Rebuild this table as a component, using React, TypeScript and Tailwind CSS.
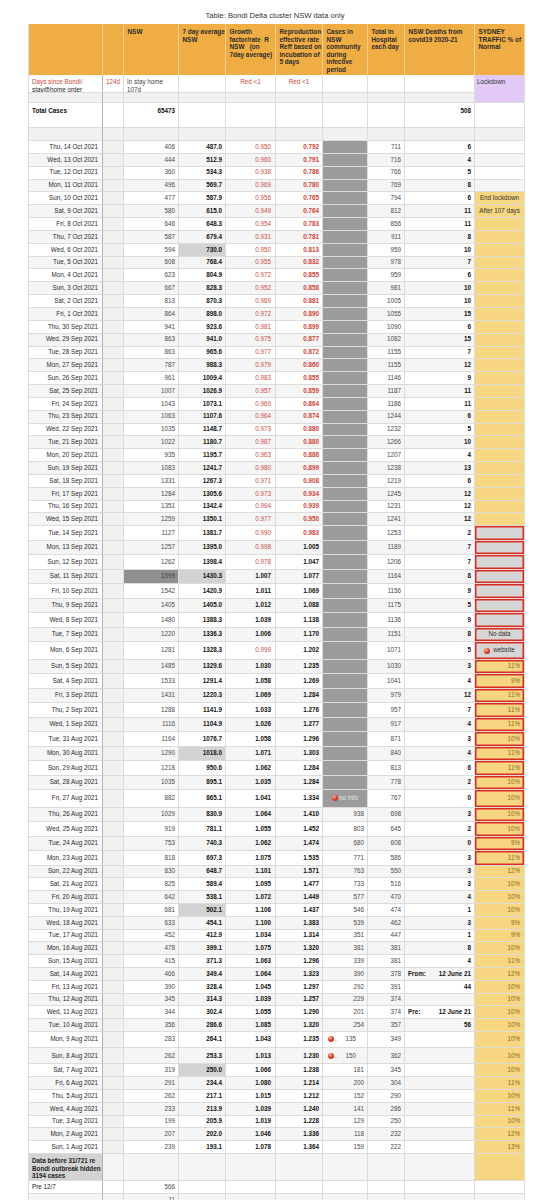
import clsx from "clsx";
import type { ReactNode } from "react";

const GRID = "grid grid-cols-[74px_21px_55px_47px_50px_47px_45px_37px_70px_50px]";

const DOW = ["Sun", "Mon", "Tue", "Wed", "Thu", "Fri", "Sat"];
const MON = ["Jan", "Feb", "Mar", "Apr", "May", "Jun", "Jul", "Aug", "Sep", "Oct", "Nov", "Dec"];

// rows run backwards one day at a time from 14 Oct 2021 to 1 Aug 2021
const NSW = "406 444 360 496 477 580 646 587 594 608 623 667 813 864 941 863 863 787 961 1007 1043 1063 1035 1022 935 1083 1331 1284 1351 1259 1127 1257 1262 1599 1542 1405 1480 1220 1281 1485 1533 1431 1288 1116 1164 1290 1218 1035 882 1029 919 753 818 830 825 642 681 633 452 478 415 466 390 345 344 356 283 262 319 291 262 233 199 207 239".split(" ");
const AVG = "487.0 512.9 534.3 569.7 587.9 615.0 648.3 679.4 730.0 768.4 804.9 828.3 870.3 898.0 923.6 941.0 965.6 988.3 1009.4 1026.9 1073.1 1107.6 1148.7 1180.7 1195.7 1241.7 1267.3 1305.6 1342.4 1350.1 1381.7 1395.0 1398.4 1430.3 1420.9 1405.0 1388.3 1336.3 1328.3 1329.6 1291.4 1220.3 1141.9 1104.9 1076.7 1018.0 950.6 895.1 865.1 830.9 781.1 740.3 697.3 648.7 589.4 538.1 502.1 454.1 412.9 399.1 371.3 349.4 328.4 314.3 302.4 286.6 264.1 253.3 250.0 234.4 217.1 213.9 205.9 202.0 193.1".split(" ");
const GROWTH = "0.950 0.960 0.938 0.969 0.956 0.949 0.954 0.931 0.950 0.955 0.972 0.952 0.969 0.972 0.981 0.975 0.977 0.979 0.983 0.957 0.969 0.964 0.973 0.987 0.963 0.980 0.971 0.973 0.994 0.977 0.990 0.998 0.978 1.007 1.011 1.012 1.039 1.006 0.999 1.030 1.058 1.069 1.033 1.026 1.058 1.071 1.062 1.035 1.041 1.064 1.055 1.062 1.075 1.101 1.095 1.072 1.106 1.100 1.034 1.075 1.063 1.064 1.045 1.039 1.055 1.085 1.043 1.013 1.066 1.080 1.015 1.039 1.019 1.046 1.078".split(" ");
const REFF = "0.792 0.791 0.786 0.780 0.765 0.764 0.783 0.781 0.813 0.832 0.855 0.858 0.881 0.890 0.899 0.877 0.872 0.860 0.855 0.859 0.864 0.874 0.880 0.880 0.886 0.899 0.908 0.934 0.939 0.950 0.983 1.005 1.047 1.077 1.069 1.088 1.138 1.170 1.202 1.235 1.269 1.284 1.276 1.277 1.296 1.303 1.284 1.284 1.334 1.410 1.452 1.474 1.535 1.571 1.477 1.449 1.437 1.383 1.314 1.320 1.296 1.323 1.297 1.257 1.290 1.320 1.235 1.230 1.238 1.214 1.212 1.240 1.228 1.336 1.364".split(" ");
const HOSP = "711 716 766 769 794 812 856 911 959 978 959 981 1005 1055 1090 1082 1155 1155 1146 1187 1186 1244 1232 1266 1207 1238 1219 1245 1231 1241 1253 1189 1206 1164 1156 1175 1136 1151 1071 1030 1041 979 957 917 871 840 813 778 767 698 645 608 586 550 516 470 474 462 447 381 381 378 391 374 374 357 349 362 345 304 290 286 250 232 222".split(" ");
const DEATHS = "6 4 5 8 6 11 11 8 10 7 6 10 10 15 6 15 7 12 9 11 11 6 5 10 4 13 6 12 12 12 2 7 7 8 9 5 9 8 5 3 4 12 7 4 3 4 6 2 0 3 2 0 3 3 3 4 1 3 1 8 4 - 44 - - 56".split(" ");
const COMM = "938 803 680 771 763 733 577 546 539 351 381 339 390 292 229 201 254 135 150 181 200 152 141 129 118 159".split(" ");
const PCT = "11 9 11 11 11 10 11 11 10 10 10 10 9 11 12 10 10 10 9 9 10 11 12 10 10 10 10 10 10 10 11 10 11 10 12 13".split(" ");

const HIGHLIGHT_AVG = [8, 33, 45, 56, 68];

const HEADERS = [
  [],
  [],
  ["NSW"],
  ["7 day average", "NSW"],
  ["Growth", "factor/rate  R", "NSW   (on", "7day average)"],
  ["Reproduction", "effective rate", "Reff based on", "incubation of", "5 days"],
  ["Cases in", "NSW", "community", "during", "infective", "period"],
  ["Total in", "Hospital", "each day"],
  ["NSW Deaths from", "covid19 2020-21"],
  ["SYDNEY", "TRAFFIC % of", "Normal"],
];

function dateLabel(i: number) {
  const d = new Date(Date.UTC(2021, 9, 14 - i));
  return `${DOW[d.getUTCDay()]}, ${d.getUTCDate()} ${MON[d.getUTCMonth()]} 2021`;
}

function rowH(i: number) {
  if (i === 38 || i === 48) return "h-[17.4px]";
  if (i >= 30 && i <= 52) return "h-[14.5px]";
  if (i === 66) return "h-[16px]";
  if (i === 67) return "h-[16.5px]";
  if (i < 30) return "h-[12.85px]";
  return "h-[12.8px]";
}

function Cell({ className, children }: { className?: string; children?: ReactNode }) {
  return (
    <div
      className={clsx(
        "flex min-w-0 items-center overflow-hidden whitespace-nowrap border-b border-r border-[#dcdcdc]",
        className,
      )}
    >
      {children}
    </div>
  );
}

function Ball() {
  return (
    <span className="inline-block h-[6px] w-[6px] shrink-0 rounded-full bg-[radial-gradient(circle_at_35%_30%,#ffb49c_0%,#e2452c_45%,#a3190b_100%)]" />
  );
}

function TrafficCell({ i, stripe }: { i: number; stripe: string }) {
  const box = "shadow-[inset_0_0_0_1.5px_#dd2c22]";
  if (i < 4) return <Cell className={stripe} />;
  if (i === 4)
    return <Cell className="justify-center bg-[#f6d680] text-[#333]">End lockdown</Cell>;
  if (i === 5)
    return <Cell className="justify-center bg-[#f6d680] text-[#333]">After 107 days</Cell>;
  if (i < 30) return <Cell className="bg-[#f6d680]" />;
  if (i < 39) {
    return (
      <Cell className={clsx("justify-center gap-[3px] bg-[#d5d5d5] text-[#333]", box)}>
        {i === 37 ? "No data" : null}
        {i === 38 ? (
          <>
            <Ball />
            website
          </>
        ) : null}
      </Cell>
    );
  }
  return (
    <Cell className={clsx("justify-end bg-[#f6d680] pr-[4px] text-[#8d6a14]", i <= 52 && box)}>
      {PCT[i - 39]}%
    </Cell>
  );
}

function DataRow({ i }: { i: number }) {
  const stripe = i % 2 === 1 ? "bg-[#f5f5f5]" : "bg-white";
  const growth = GROWTH[i];
  const reff = REFF[i];
  const death = DEATHS[i];

  let comm: ReactNode = null;
  let commCls = "justify-end pr-[3px] text-[#4a4a4a]";
  if (i < 49) {
    commCls = "bg-[#9b9b9b] border-[#b5b5b5]";
    if (i === 48) {
      comm = (
        <span className="flex items-center gap-[1px] pl-[9px] text-[#e6e6e6]">
          <Ball />
          no info
        </span>
      );
    }
  } else if (i === 66 || i === 67) {
    commCls = "pl-[5px] text-[#4a4a4a]";
    comm = (
      <>
        <Ball />
        <span className="ml-[1px]">.</span>
        <span className="ml-auto mr-[11px]">{COMM[i - 49]}</span>
      </>
    );
  } else {
    comm = COMM[i - 49];
  }

  let deathCell: ReactNode = death && death !== "-" ? death : null;
  let deathCls = "justify-end pr-[3px]";
  if (i === 61 || i === 64) {
    deathCls = "justify-between px-[3px]";
    deathCell = (
      <>
        <span>{i === 61 ? "From:" : "Pre:"}</span>
        <span>12 June 21</span>
      </>
    );
  }

  return (
    <div className={clsx(GRID, rowH(i))}>
      <Cell className={clsx(stripe, "justify-end border-r-[1.5px] border-r-[#b3b3b3] pr-[4px] text-[#2a2a2a]")}>
        {dateLabel(i)}
      </Cell>
      <Cell className="bg-[#f1f1f1]" />
      <Cell
        className={clsx(
          "justify-end pr-[3px]",
          i === 33 ? "bg-[#8f8f8f] text-[#444]" : clsx(stripe, "text-[#4a4a4a]"),
        )}
      >
        {NSW[i]}
      </Cell>
      <Cell
        className={clsx(
          "justify-end pr-[3px] font-bold text-[#111]",
          HIGHLIGHT_AVG.includes(i) ? "bg-[#d3d3d3]" : stripe,
        )}
      >
        {AVG[i]}
      </Cell>
      <Cell
        className={clsx(
          stripe,
          "justify-end pr-[4px]",
          Number(growth) < 1 ? "text-[#d04a3c]" : "font-bold text-[#111]",
        )}
      >
        {growth}
      </Cell>
      <Cell
        className={clsx(
          stripe,
          "justify-end pr-[3px] font-bold",
          Number(reff) < 1 ? "text-[#d43f33]" : "text-[#111]",
        )}
      >
        {reff}
      </Cell>
      <Cell className={clsx(i < 49 ? null : stripe, commCls)}>{comm}</Cell>
      <Cell className={clsx(stripe, "justify-end pr-[3px] text-[#4a4a4a]")}>{HOSP[i]}</Cell>
      <Cell className={clsx(stripe, deathCls, "font-bold text-[#111]")}>{deathCell}</Cell>
      <TrafficCell i={i} stripe={stripe} />
    </div>
  );
}

export default function App() {
  const rows = Array.from({ length: 75 }, (_, i) => i);

  return (
    <div className="min-h-[1200px] bg-white font-['Liberation_Sans',Arial,sans-serif] text-[6.3px] leading-none text-[#222]">
      <div className="h-[24px] pt-[11px] text-center text-[7.6px] leading-[10px] text-[#333]">
        Table: Bondi Delta cluster NSW data only
      </div>

      <div className="ml-[28px] w-[496px] border-l border-[#dcdcdc]">
        {/* header */}
        <div className={clsx(GRID, "h-[51px] bg-[#efad44] text-[6.4px] font-bold leading-[7.5px] text-[#2b2b2b]")}>
          {HEADERS.map((lines, k) => (
            <div key={k} className="overflow-hidden whitespace-pre border-r border-[#f6d28f] px-[3.5px] pt-[4px]">
              {lines.map((l) => (
                <div key={l}>{l}</div>
              ))}
            </div>
          ))}
        </div>

        {/* days since */}
        <div className={clsx(GRID, "h-[18px] leading-[7.5px]")}>
          <Cell className="items-start border-r-[1.5px] border-r-[#b3b3b3] pl-[3px] pt-[3px]">
            <div>
              <div className="text-[#c8483b]">Days since Bondi/</div>
              <div>stay@home order</div>
            </div>
          </Cell>
          <Cell className="items-start pl-[3px] pt-[3px] text-[#c8483b]">124d</Cell>
          <Cell className="items-start pl-[3px] pt-[3px] text-[#444]">
            <div>
              <div>In stay home</div>
              <div>107d</div>
            </div>
          </Cell>
          <Cell />
          <Cell className="items-start justify-center pt-[3px] text-[#c8483b]">Red &lt;1</Cell>
          <Cell className="items-start justify-center pt-[3px] text-[#c8483b]">Red &lt;1</Cell>
          <Cell />
          <Cell />
          <Cell />
          <Cell className="items-start border-b-[#e3c9f6] bg-[#e3c9f6] pl-[2px] pt-[3px] text-[#333]">Lockdown</Cell>
        </div>

        <div className={clsx(GRID, "h-[10px]")}>
          {Array.from({ length: 9 }, (_, k) => (
            <Cell key={k} className={clsx("bg-[#f1f1f1]", k === 0 && "border-r-[1.5px] border-r-[#b3b3b3]")} />
          ))}
          <Cell className="bg-[#e3c9f6]" />
        </div>

        {/* totals */}
        <div className={clsx(GRID, "h-[25px] font-bold text-[#111]")}>
          <Cell className="items-start border-r-[1.5px] border-r-[#b3b3b3] pl-[3px] pt-[5px]">Total Cases</Cell>
          <Cell />
          <Cell className="items-start justify-end pr-[3px] pt-[5px]">65473</Cell>
          <Cell />
          <Cell />
          <Cell />
          <Cell />
          <Cell />
          <Cell className="items-start justify-end pr-[3px] pt-[5px]">508</Cell>
          <Cell />
        </div>

        <div className={clsx(GRID, "h-[13px]")}>
          {Array.from({ length: 10 }, (_, k) => (
            <Cell key={k} className={clsx("bg-[#f1f1f1]", k === 0 && "border-r-[1.5px] border-r-[#b3b3b3]")} />
          ))}
        </div>

        {rows.map((i) => (
          <DataRow key={i} i={i} />
        ))}

        {/* notes below the daily rows */}
        <div className={clsx(GRID, "h-[27.4px]")}>
          <Cell className="items-start border-r-[1.5px] border-r-[#b3b3b3] bg-[#d3d3d3] pl-[3px] pt-[3px] font-bold leading-[7.5px] text-[#222]">
            <div>
              <div>Data before 31/721 re</div>
              <div>Bondi outbreak hidden</div>
              <div>3194 cases</div>
            </div>
          </Cell>
          {Array.from({ length: 8 }, (_, k) => (
            <Cell key={k} className="bg-[#f5f5f5]" />
          ))}
          <Cell className="bg-[#f6d680]" />
        </div>

        <div className={clsx(GRID, "h-[13px]")}>
          <Cell className="border-r-[1.5px] border-r-[#b3b3b3] pl-[3px]">Pre 12/7</Cell>
          <Cell />
          <Cell className="justify-end pr-[3px] text-[#4a4a4a]">566</Cell>
          <Cell />
          <Cell />
          <Cell />
          <Cell />
          <Cell />
          <Cell />
          <Cell />
        </div>

        <div className={clsx(GRID, "h-[13px]")}>
          <Cell className="border-r-[1.5px] border-r-[#b3b3b3] bg-[#f5f5f5]" />
          <Cell className="bg-[#f5f5f5]" />
          <Cell className="justify-end bg-[#f5f5f5] pr-[3px] text-[#4a4a4a]">-11</Cell>
          {Array.from({ length: 7 }, (_, k) => (
            <Cell key={k} className="bg-[#f5f5f5]" />
          ))}
        </div>
      </div>
    </div>
  );
}
